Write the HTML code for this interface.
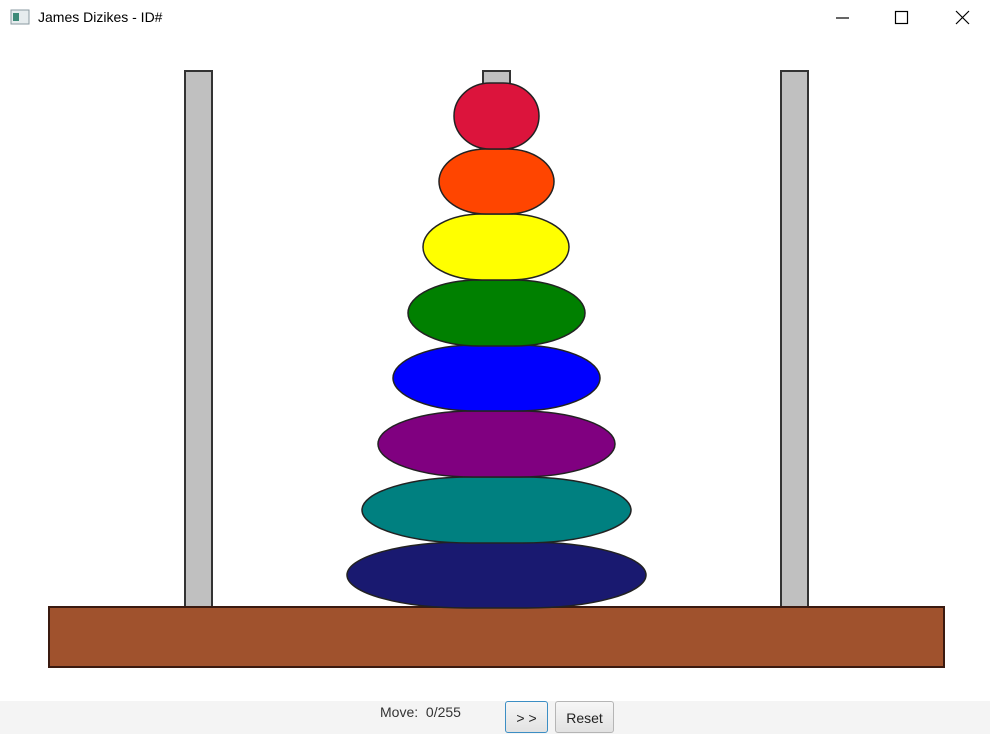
<!DOCTYPE html>
<html><head><style>
body{margin:0;width:990px;height:734px;overflow:hidden;background:#fff;font-family:"Liberation Sans",sans-serif;position:relative}
.title{position:absolute;left:38px;top:9px;font-size:14px;color:#000}
.bar{position:absolute;left:0;top:701px;width:990px;height:33px;background:#f4f4f4}
.btn{position:absolute;top:701px;height:32px;border:1px solid #b5b5b5;border-radius:3px;background:linear-gradient(#f6f6f6,#e2e2e2);font-size:14px;text-align:center;line-height:32px;box-sizing:border-box;color:#222}
</style></head><body>
<svg width="990" height="734" style="position:absolute;left:0;top:0">
<rect x="11" y="10" width="18" height="14" fill="#e6ecee" stroke="#8a9aa0"/>
<rect x="13" y="13" width="6" height="8" fill="#3d8a78"/>
<line x1="836" y1="18" x2="849" y2="18" stroke="#000" stroke-width="1.2"/>
<rect x="895.5" y="11.5" width="12" height="12" fill="none" stroke="#000" stroke-width="1.2"/>
<path d="M956 11 L969 24 M969 11 L956 24" stroke="#000" stroke-width="1.2"/>
<g stroke="#333" stroke-width="2">
<rect x="185" y="71" width="27" height="537" fill="#c0c0c0"/>
<rect x="483" y="71" width="27" height="537" fill="#c0c0c0"/>
<rect x="781" y="71" width="27" height="537" fill="#c0c0c0"/>
<rect x="49" y="607" width="895" height="60" fill="#a0522d" stroke="#3a1a10"/>
</g>
<g stroke="#222" stroke-width="1.5">
<rect x="347" y="542" width="299" height="66" rx="120" ry="33" fill="#191970"/>
<rect x="362" y="477" width="269" height="66" rx="108" ry="33" fill="#008080"/>
<rect x="378" y="411" width="237" height="66" rx="95" ry="33" fill="#800080"/>
<rect x="393" y="345" width="207" height="66" rx="83" ry="33" fill="#0000ff"/>
<rect x="408" y="280" width="177" height="66" rx="71" ry="33" fill="#008000"/>
<rect x="423" y="214" width="146" height="66" rx="59" ry="33" fill="#ffff00"/>
<rect x="439" y="149" width="115" height="65" rx="47" ry="32.5" fill="#ff4500"/>
<rect x="454" y="83" width="85" height="66" rx="36" ry="33" fill="#dc143c"/>
</g>
</svg>
<div class="title">James Dizikes - ID#</div>
<div class="bar"></div>
<div style="position:absolute;left:380px;top:704px;font-size:14px;color:#333">Move:&nbsp; 0/255</div>
<div class="btn" style="left:505px;width:43px;border:1px solid #3c8ec4;">&gt; &gt;</div>
<div class="btn" style="left:555px;width:59px">Reset</div>
</body></html>
